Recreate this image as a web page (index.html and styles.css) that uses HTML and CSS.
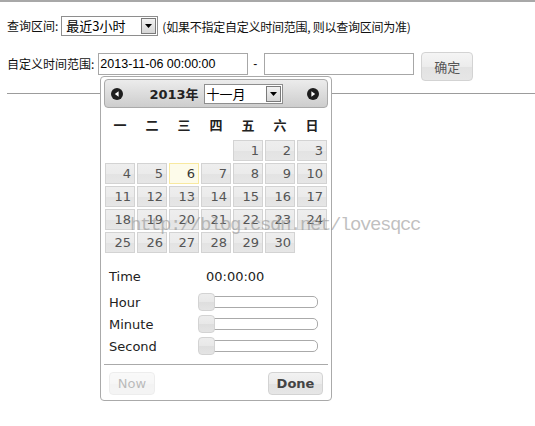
FILE: index.html
```html
<!DOCTYPE html>
<html lang="zh-CN">
<head>
<meta charset="utf-8">
<title>查询</title>
<link rel="stylesheet" href="styles.css">
</head>
<body>
<div class="topline"></div>
<div class="row row1">
  <span class="label lbl1">查询区间:</span>
  <span class="select sel-range"><span class="sel-text">最近3小时</span><span class="sel-btn"><svg width="7" height="4" viewBox="0 0 7 4"><path d="M0 0H7L3.5 4Z" fill="#000"/></svg></span></span>
  <span class="hint">(如果不指定自定义时间范围, 则以查询区间为准)</span>
</div>
<div class="row row2">
  <span class="label lbl2">自定义时间范围:</span>
  <input class="field" type="text" value="2013-11-06 00:00:00">
  <span class="dash">-</span>
  <input class="field" type="text" value="">
  <button class="btn-ok" type="button">确定</button>
</div>
<hr class="rule">

<div class="dp">
  <div class="dp-head">
    <svg class="nav nav-prev" width="12" height="12" viewBox="0 0 12 12"><circle cx="6" cy="6" r="6" fill="#1e1e1e"/><path d="M7.6 3.3L3.8 6L7.6 8.7Z" fill="#fff"/></svg>
    <div class="dp-title">
      <span class="year">2013<span class="cjk">年</span></span>
      <span class="select sel-month"><span class="sel-text">十一月</span><span class="sel-btn"><svg width="7" height="4" viewBox="0 0 7 4"><path d="M0 0H7L3.5 4Z" fill="#000"/></svg></span></span>
    </div>
    <svg class="nav nav-next" width="12" height="12" viewBox="0 0 12 12"><circle cx="6" cy="6" r="6" fill="#1e1e1e"/><path d="M4.4 3.3L8.2 6L4.4 8.7Z" fill="#fff"/></svg>
  </div>
  <div class="dp-week">
    <span>一</span><span>二</span><span>三</span><span>四</span><span>五</span><span>六</span><span>日</span>
  </div>
  <div class="dp-days">
    <a class="day first">1</a><a class="day">2</a><a class="day">3</a>
    <a class="day">4</a><a class="day">5</a><a class="day today">6</a><a class="day">7</a><a class="day">8</a><a class="day">9</a><a class="day">10</a>
    <a class="day">11</a><a class="day">12</a><a class="day">13</a><a class="day">14</a><a class="day">15</a><a class="day">16</a><a class="day">17</a>
    <a class="day">18</a><a class="day">19</a><a class="day">20</a><a class="day">21</a><a class="day">22</a><a class="day">23</a><a class="day">24</a>
    <a class="day">25</a><a class="day">26</a><a class="day">27</a><a class="day">28</a><a class="day">29</a><a class="day">30</a>
  </div>
  <div class="tp">
    <div class="tp-row tp-time"><span class="tp-label">Time</span><span class="tp-value">00:00:00</span></div>
    <div class="tp-row"><span class="tp-label">Hour</span><span class="slider"><span class="handle"></span></span></div>
    <div class="tp-row"><span class="tp-label">Minute</span><span class="slider"><span class="handle"></span></span></div>
    <div class="tp-row"><span class="tp-label">Second</span><span class="slider"><span class="handle"></span></span></div>
  </div>
  <div class="dp-pane">
    <button class="dp-btn btn-now" type="button">Now</button>
    <button class="dp-btn btn-done" type="button">Done</button>
  </div>
</div>

<div class="watermark">http://blog.csdn.net/lovesqcc</div>
</body>
</html>
```
FILE: styles.css
```css
html, body {
  margin: 0;
  padding: 0;
  background: #fff;
}
body {
  font-family: "Noto Sans CJK SC", "Liberation Sans", sans-serif;
  font-size: 12px;
  color: #111;
  position: relative;
  width: 535px;
  height: 426px;
  overflow: hidden;
}
.topline {
  height: 2px;
  background: #a8a8a8;
}
.row {
  display: flex;
  padding-left: 7px;
}
.row1 {
  margin-top: 14px;
  height: 20px;
  align-items: center;
}
.row2 {
  margin-top: 16px;
  height: 29px;
  align-items: flex-start;
}
.label {
  line-height: 20px;
  white-space: nowrap;
}
.lbl1 { margin-right: 3px; }
.lbl2 { margin-right: 4px; line-height: 22px; margin-top: 1px; }
.select {
  display: inline-flex;
  align-items: center;
  box-sizing: border-box;
  border: 1px solid #8e8e8e;
  background: #fff;
  font-size: 13px;
  color: #000;
}
.sel-range {
  width: 97px;
  height: 20px;
}
.sel-text {
  flex: 1;
  padding-left: 4px;
  line-height: 18px;
  white-space: nowrap;
}
.sel-btn {
  box-sizing: border-box;
  width: 15px;
  height: 16px;
  margin-right: 1px;
  border: 1px solid #7a7a7a;
  background: linear-gradient(#f2f2f2, #d6d6d6);
  display: flex;
  align-items: center;
  justify-content: center;
}
.hint {
  margin-left: 4px;
  white-space: nowrap;
  letter-spacing: -0.25px;
}
.field {
  box-sizing: border-box;
  width: 150px;
  height: 22px;
  margin: 1px 0 0 0;
  padding: 0 1px;
  border: 1px solid #a7a7a7;
  font-family: "Liberation Sans", Arial, sans-serif;
  font-size: 12.5px;
  color: #000;
  outline: none;
}
.dash {
  font-family: "Liberation Sans", Arial, sans-serif;
  line-height: 22px;
  margin: 1px 7px 0 5px;
}
.btn-ok {
  box-sizing: border-box;
  width: 52px;
  height: 29px;
  margin-left: 7px;
  border: 1px solid #d3d3d3;
  border-radius: 4px;
  background: linear-gradient(#f5f5f5 0%, #ececec 50%, #e2e2e2 51%, #e6e6e6 100%);
  font-family: "Noto Sans CJK SC", sans-serif;
  font-size: 13px;
  color: #555;
  padding: 0;
}
.rule {
  border: 0;
  border-top: 1px solid #9c9c9c;
  height: 0;
  margin: 12px 0 0 7px;
}

/* datepicker */
.dp {
  position: absolute;
  left: 100px;
  top: 76px;
  width: 232px;
  box-sizing: border-box;
  padding: 2px 3px 5px;
  border: 1px solid #aaa;
  border-radius: 4px;
  background: #fff;
  font-family: "DejaVu Sans", Verdana, sans-serif;
  font-size: 13px;
  color: #222;
}
.dp-head {
  box-sizing: border-box;
  height: 29px;
  border: 1px solid #aaa;
  border-radius: 4px;
  background: linear-gradient(#ececec, #cdcdcd);
  display: grid;
  grid-template-columns: 1fr auto 1fr;
  align-items: center;
}
.nav-prev { justify-self: start; margin-left: 6px; }
.nav-next { justify-self: end; margin-right: 8px; }
.dp-title {
  display: flex;
  align-items: center;
  gap: 5px;
}
.year {
  font-weight: bold;
  font-size: 13px;
  color: #222;
}
.cjk {
  font-family: "Noto Sans CJK SC", sans-serif;
  font-weight: bold;
}
.sel-month {
  width: 79px;
  height: 20px;
  font-family: "Noto Sans CJK SC", sans-serif;
}
.sel-month .sel-text { padding-left: 2px; }
.dp-week {
  display: grid;
  grid-template-columns: repeat(7, 32px);
  height: 31px;
  align-items: center;
  padding-top: 2px;
  box-sizing: border-box;
  font-family: "Noto Sans CJK SC", sans-serif;
  font-weight: bold;
  font-size: 13px;
  color: #222;
  text-align: center;
}
.dp-days {
  display: grid;
  grid-template-columns: repeat(7, 32px);
  grid-auto-rows: 23px;
}
.day {
  box-sizing: border-box;
  margin: 1px;
  border: 1px solid #d3d3d3;
  background: linear-gradient(#eeeeee 0%, #ebebeb 50%, #e3e3e3 51%, #e6e6e6 100%);
  color: #555;
  text-align: right;
  padding-right: 3px;
  line-height: 19px;
  font-size: 13px;
}
.day.first { grid-column-start: 5; }
.day.today {
  background: #fdfbea;
  border-color: #f8e9a0;
  color: #363636;
}
.tp {
  margin-top: 11px;
}
.tp-row {
  display: grid;
  grid-template-columns: 94px 120px;
  height: 22px;
  align-items: center;
}
.tp-time { margin-bottom: 4px; }
.tp-label { padding-left: 5px; }
.tp-value { padding-left: 8px; }
.slider {
  position: relative;
  box-sizing: border-box;
  height: 12px;
  border: 1px solid #aaa;
  border-radius: 5px;
  background: #fff;
}
.handle {
  position: absolute;
  left: -1px;
  top: -4px;
  box-sizing: border-box;
  width: 17px;
  height: 18px;
  border: 1px solid #d3d3d3;
  border-radius: 4px;
  background: linear-gradient(#ededed 0%, #e8e8e8 50%, #dedede 51%, #e4e4e4 100%);
}
.dp-pane {
  margin-top: 7px;
  border-top: 1px solid #aaa;
  display: flex;
  justify-content: space-between;
  padding: 7px 5px 0;
}
.dp-btn {
  box-sizing: border-box;
  height: 23px;
  padding: 0;
  border: 1px solid #d3d3d3;
  border-radius: 4px;
  background: linear-gradient(#f2f2f2 0%, #ebebeb 50%, #e2e2e2 51%, #e6e6e6 100%);
  font-family: "DejaVu Sans", Verdana, sans-serif;
  font-size: 13px;
  color: #555;
}
.btn-now {
  width: 46px;
  opacity: 0.4;
}
.btn-done {
  width: 55px;
  font-weight: bold;
  color: #444;
}
.watermark {
  position: absolute;
  left: 130px;
  top: 216px;
  font-family: "Liberation Mono", "Courier New", monospace;
  font-size: 19px;
  line-height: 19px;
  letter-spacing: -1.4px;
  color: rgba(150, 150, 150, 0.6);
  white-space: nowrap;
  pointer-events: none;
}
```
